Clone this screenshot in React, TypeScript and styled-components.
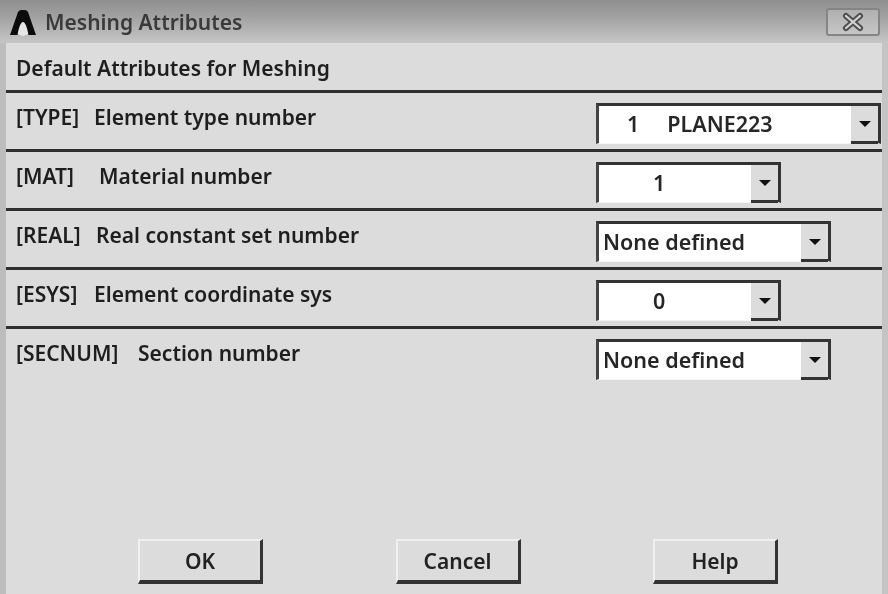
import React from 'react'
import styled, { createGlobalStyle } from 'styled-components'

const Global = createGlobalStyle`
  html, body {
    margin: 0;
    padding: 0;
    background: #dcdcdc;
  }
`

const Dialog = styled.div`
  width: 888px;
  height: 594px;
  display: flex;
  flex-direction: column;
  box-sizing: border-box;
  overflow: hidden;
  background: #dcdcdc;
  font-family: 'Noto Sans', 'Open Sans', sans-serif;
  color: #1e1e1e;
  filter: blur(0.7px);
`

const TitleBar = styled.div`
  height: 43px;
  flex: none;
  display: flex;
  align-items: center;
  box-sizing: border-box;
  padding: 0 8px 0 9px;
  background: linear-gradient(#8f8f8f, #a2a2a2 40%, #c6c6c6);
`

const Logo = styled.svg`
  width: 28px;
  height: 30px;
  flex: none;
  margin-right: 8px;
`

const Title = styled.span`
  flex: 1;
  font-size: 21px;
  font-weight: 600;
  color: #3a3a3a;
`

const CloseButton = styled.div`
  width: 54px;
  height: 28px;
  box-sizing: border-box;
  display: flex;
  align-items: center;
  justify-content: center;
  border: 2px solid #858585;
  border-radius: 3px;
  background: linear-gradient(#b0b0b0, #c6c6c6);
`

const Body = styled.div`
  flex: 1;
  display: flex;
  flex-direction: column;
  margin: 0 6px 0 6px;
  background: #dcdcdc;
  box-shadow: -6px 0 0 #bdbdbd, 6px 0 0 #c4c4c4;
`

const Heading = styled.div`
  height: 50px;
  flex: none;
  box-sizing: border-box;
  padding: 7px 0 0 10px;
  font-size: 21px;
  font-weight: 600;
  line-height: 36px;
  border-bottom: 3px solid #2f2f2f;
`

const Row = styled.div`
  height: 59px;
  flex: none;
  box-sizing: border-box;
  display: flex;
  justify-content: space-between;
  padding-left: 10px;
  border-bottom: ${p => (p.$last ? 'none' : '3px solid #2f2f2f')};
`

const Label = styled.div`
  display: flex;
  font-size: 21px;
  font-weight: 600;
  line-height: 28px;
  padding-top: 10px;
  white-space: pre;
`

const Tag = styled.span`
  width: ${p => p.$width}px;
  flex: none;
`

const SelectColumn = styled.div`
  width: 286px;
  flex: none;
  padding-top: 10px;
`

const Select = styled.div`
  width: ${p => p.$width}px;
  height: 41px;
  box-sizing: border-box;
  display: flex;
  background: #fff;
  border-top: 3px solid #333;
  border-left: 3px solid #444;
  border-right: 3px solid #333;
  border-bottom: 1px solid #f4f4f4;
`

const SelectValue = styled.div`
  flex: 1;
  font-size: 21.5px;
  font-weight: 600;
  line-height: 35px;
  white-space: pre;
  padding-left: ${p => p.$indent}px;
  color: #262626;
`

const Arrow = styled.div`
  width: 27px;
  flex: none;
  margin-bottom: -1px;
  box-sizing: border-box;
  display: flex;
  align-items: center;
  justify-content: center;
  background: #dcdcdc;
  border-bottom: 3px solid #333;
  &::after {
    content: '';
    border-left: 6px solid transparent;
    border-right: 6px solid transparent;
    border-top: 6px solid #111;
  }
`

const Spacer = styled.div`
  flex: 1;
`

const Buttons = styled.div`
  flex: none;
  display: flex;
  justify-content: space-between;
  padding: 0 104px 10px 132px;
`

const Button = styled.button`
  width: 125px;
  height: 45px;
  box-sizing: border-box;
  padding: 0;
  font-family: inherit;
  font-size: 21px;
  font-weight: 600;
  color: #222;
  background: #dcdcdc;
  border-top: 2px solid #f0f0f0;
  border-left: 2px solid #f0f0f0;
  border-right: 3px solid #333;
  border-bottom: 4px solid #333;
`

const rows = [
  { tag: '[TYPE]', tagWidth: 78, name: 'Element type number', value: '1     PLANE223', width: 285, indent: 28 },
  { tag: '[MAT]', tagWidth: 83, name: 'Material number', value: '1', width: 185, indent: 54 },
  { tag: '[REAL]', tagWidth: 80, name: 'Real constant set number', value: 'None defined', width: 235, indent: 4 },
  { tag: '[ESYS]', tagWidth: 78, name: 'Element coordinate sys', value: '0', width: 185, indent: 54 },
  { tag: '[SECNUM]', tagWidth: 122, name: 'Section number', value: 'None defined', width: 235, indent: 4 },
]

export default function App() {
  return (
    <Dialog>
      <Global />
      <TitleBar>
        <Logo viewBox="0 0 28 30">
          <ellipse cx="14" cy="19" rx="8" ry="10" fill="#f2f2f2" opacity="0.8" />
          <path
            d="M1 28 L9 5 Q10 3 12.500 3 H15.500 Q18 3 19 5 L27 28 H19.500 C18.500 22 16.500 15 14 15 C11.500 15 9.500 22 8.500 28 Z"
            fill="#0c0c0c"
          />
        </Logo>
        <Title>Meshing Attributes</Title>
        <CloseButton>
          <svg width="24" height="20" viewBox="0 0 24 20">
            <path d="M5 4 L19 16 M19 4 L5 16" stroke="#4e4e4e" strokeWidth="6" strokeLinecap="round" />
            <path d="M5 4 L19 16 M19 4 L5 16" stroke="#d4d4d4" strokeWidth="2.2" strokeLinecap="round" />
          </svg>
        </CloseButton>
      </TitleBar>
      <Body>
        <Heading>Default Attributes for Meshing</Heading>
        {rows.map((r, i) => (
          <Row key={r.tag} $last={i === rows.length - 1}>
            <Label>
              <Tag $width={r.tagWidth}>{r.tag}</Tag>
              {r.name}
            </Label>
            <SelectColumn>
              <Select $width={r.width}>
                <SelectValue $indent={r.indent}>{r.value}</SelectValue>
                <Arrow />
              </Select>
            </SelectColumn>
          </Row>
        ))}
        <Spacer />
        <Buttons>
          <Button>OK</Button>
          <Button>Cancel</Button>
          <Button>Help</Button>
        </Buttons>
      </Body>
    </Dialog>
  )
}
